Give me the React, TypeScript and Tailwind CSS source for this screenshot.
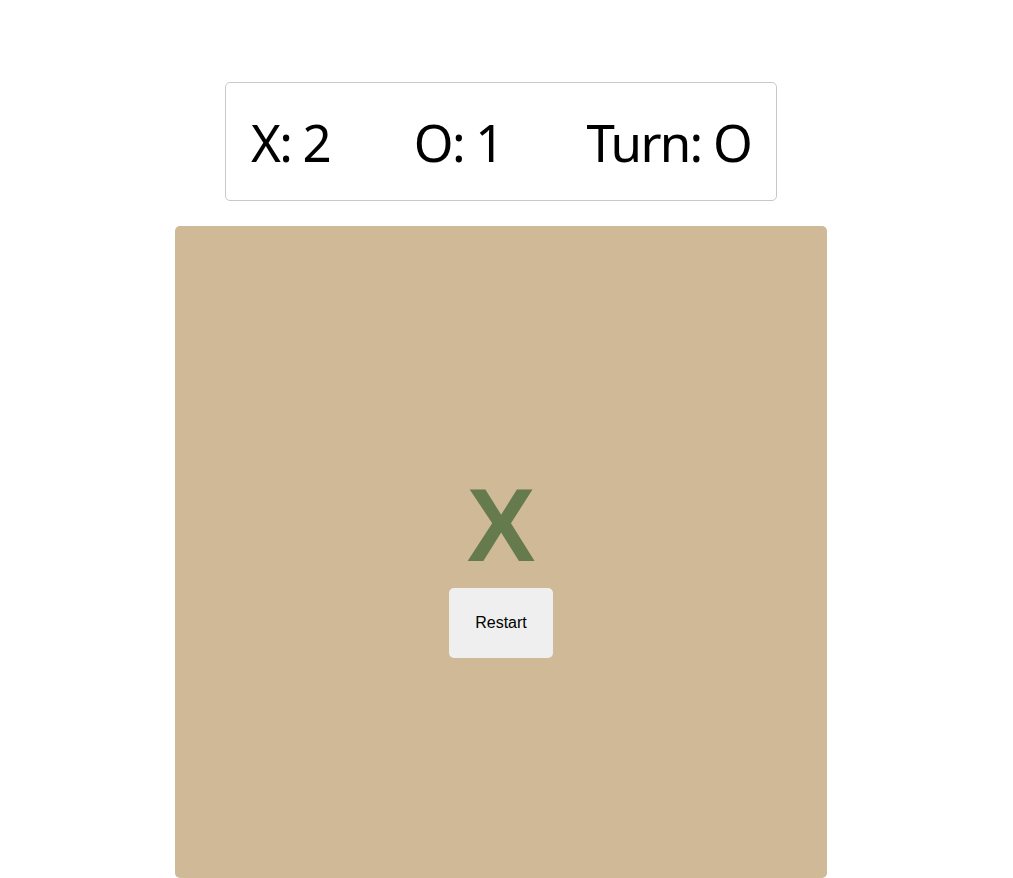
import React from 'react';

function App() {
  return (
    <div className="min-h-screen bg-white pr-[11px] pt-[82px]">
      <div className="flex flex-col items-center gap-[25px]">
        <div
          className="flex w-[552px] h-[119px] items-center justify-between rounded-[5px] border border-[#c8c8c8] px-[25px] pt-[2px] text-[51px] font-[370] tracking-[-1.75px] text-black"
          style={{ fontFamily: '"Noto Sans", "Open Sans", sans-serif' }}
        >
          <span>X: 2</span>
          <span>O: 1</span>
          <span>Turn: O</span>
        </div>

        <div className="flex w-[652px] h-[652px] flex-col items-center justify-center rounded-[5px] bg-[#d0b997]">
          <div
            className="mt-[21px] mb-[3px] text-[103px] font-bold leading-[1.15] text-[#657a4d]"
            style={{ fontFamily: '"Liberation Sans", Arial, sans-serif' }}
          >
            X
          </div>
          <button
            className="rounded-[5px] bg-[#efefef] px-[26px] py-[25px] text-[16px] leading-[20px] text-black"
            style={{ fontFamily: '"Liberation Sans", Arial, sans-serif' }}
          >
            Restart
          </button>
        </div>
      </div>
    </div>
  );
}

export default App;
